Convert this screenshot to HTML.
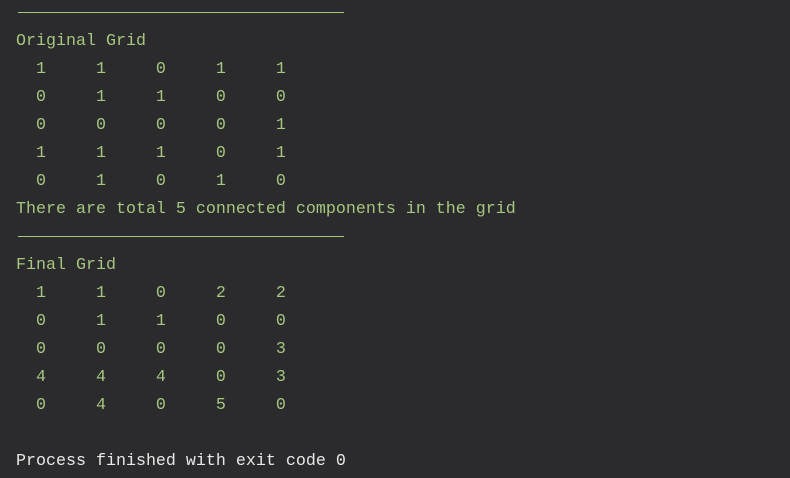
<!DOCTYPE html>
<html><head><meta charset="utf-8"><style>
html,body{margin:0;padding:0;background:#2b2a2d;width:790px;height:478px;overflow:hidden}
pre{position:absolute;left:16px;top:28px;margin:0;font-family:"Liberation Mono","DejaVu Sans Mono",monospace;font-size:16.67px;line-height:28px;color:#a5c77f}
.w{color:#e8e8e8}
.sep{position:absolute;left:18px;width:326px;height:1px;background:#a5c77f}
</style></head><body>
<div class="sep" style="top:12px"></div>
<div class="sep" style="top:236px"></div>
<pre>Original Grid
  1     1     0     1     1
  0     1     1     0     0
  0     0     0     0     1
  1     1     1     0     1
  0     1     0     1     0
There are total 5 connected components in the grid

Final Grid
  1     1     0     2     2
  0     1     1     0     0
  0     0     0     0     3
  4     4     4     0     3
  0     4     0     5     0

<span class="w">Process finished with exit code 0</span></pre>
</body></html>
